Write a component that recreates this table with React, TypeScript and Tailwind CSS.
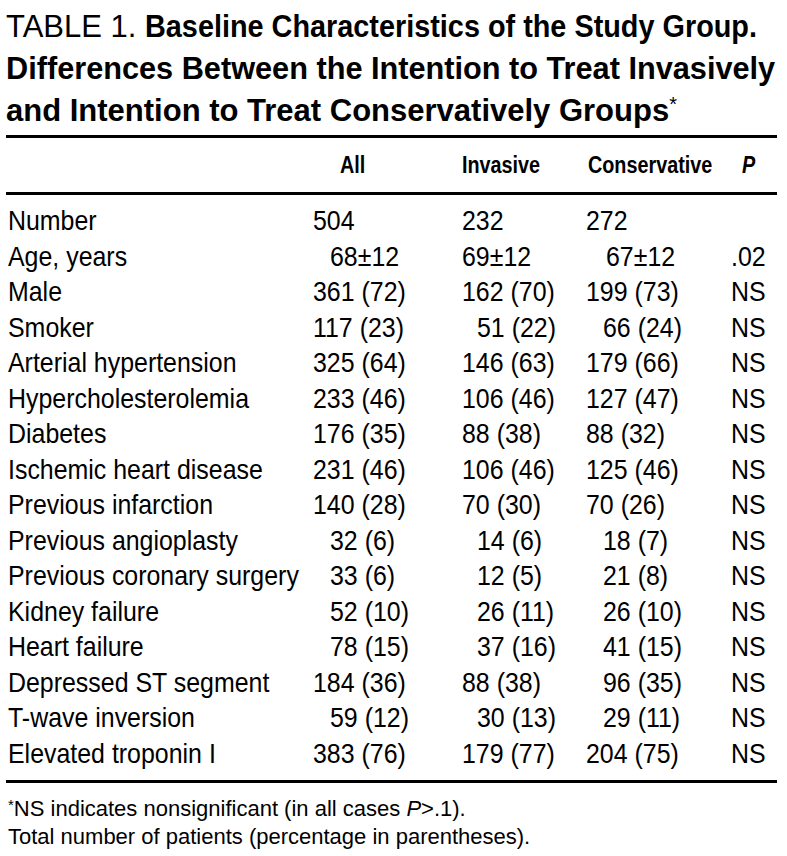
import React from "react";

type Cell = [string, number];
const rows: { label: string; a: Cell; i: Cell; c: Cell; p: string }[] = [
  { label: "Number", a: ["504", 0], i: ["232", 0], c: ["272", 0], p: "" },
  { label: "Age, years", a: ["68±12", 17], i: ["69±12", 0], c: ["67±12", 20], p: ".02" },
  { label: "Male", a: ["361 (72)", 0], i: ["162 (70)", 0], c: ["199 (73)", 0], p: "NS" },
  { label: "Smoker", a: ["117 (23)", 0], i: ["51 (22)", 15], c: ["66 (24)", 17], p: "NS" },
  { label: "Arterial hypertension", a: ["325 (64)", 0], i: ["146 (63)", 0], c: ["179 (66)", 0], p: "NS" },
  { label: "Hypercholesterolemia", a: ["233 (46)", 0], i: ["106 (46)", 0], c: ["127 (47)", 0], p: "NS" },
  { label: "Diabetes", a: ["176 (35)", 0], i: ["88 (38)", 0], c: ["88 (32)", 0], p: "NS" },
  { label: "Ischemic heart disease", a: ["231 (46)", 0], i: ["106 (46)", 0], c: ["125 (46)", 0], p: "NS" },
  { label: "Previous infarction", a: ["140 (28)", 0], i: ["70 (30)", 0], c: ["70 (26)", 0], p: "NS" },
  { label: "Previous angioplasty", a: ["32 (6)", 17], i: ["14 (6)", 15], c: ["18 (7)", 17], p: "NS" },
  { label: "Previous coronary surgery", a: ["33 (6)", 17], i: ["12 (5)", 15], c: ["21 (8)", 17], p: "NS" },
  { label: "Kidney failure", a: ["52 (10)", 17], i: ["26 (11)", 15], c: ["26 (10)", 17], p: "NS" },
  { label: "Heart failure", a: ["78 (15)", 17], i: ["37 (16)", 15], c: ["41 (15)", 17], p: "NS" },
  { label: "Depressed ST segment", a: ["184 (36)", 0], i: ["88 (38)", 0], c: ["96 (35)", 17], p: "NS" },
  { label: "T-wave inversion", a: ["59 (12)", 17], i: ["30 (13)", 15], c: ["29 (11)", 17], p: "NS" },
  { label: "Elevated troponin I", a: ["383 (76)", 0], i: ["179 (77)", 0], c: ["204 (75)", 0], p: "NS" },
];

const font = { fontFamily: '"Liberation Sans", Arial, sans-serif' };

function N({ children }: { children: React.ReactNode }) {
  return <span className="inline-block origin-left scale-x-[0.89]">{children}</span>;
}

export default function App() {
  return (
    <div className="w-[787px] h-[856px] bg-white text-black px-[6px] pt-[6px]" style={font}>
      <div className="text-[31px] leading-[42px] whitespace-nowrap">
        <div>
          <span>TABLE 1. </span>
          <span className="inline-block origin-left scale-x-[0.93] font-bold">
            Baseline Characteristics of the Study Group.
          </span>
        </div>
        <div>
          <span className="inline-block origin-left scale-x-[0.99] font-bold">
            Differences Between the Intention to Treat Invasively
          </span>
        </div>
        <div>
          <span className="font-bold">and Intention to Treat Conservatively Groups</span>
          <span className="relative top-[-10px] text-[20px]">*</span>
        </div>
      </div>
      <div className="w-[771px] border-t-[3px] border-black" />
      <div className="grid grid-cols-[307px_149px_124px_145px_1fr] h-[54px] items-center font-bold text-[23px] whitespace-nowrap">
        <div />
        <div className="pl-[27px]">
          <span className="inline-block origin-left scale-x-[0.86]">All</span>
        </div>
        <div className="pl-[0px]">
          <span className="inline-block origin-left scale-x-[0.86]">Invasive</span>
        </div>
        <div className="pl-[2px]">
          <span className="inline-block origin-left scale-x-[0.86]">Conservative</span>
        </div>
        <div className="pl-[11px] italic">
          <span className="inline-block origin-left scale-x-[0.86]">P</span>
        </div>
      </div>
      <div className="w-[771px] border-t-[3px] border-black" />
      <div className="pt-[8px] text-[28px] leading-[35.5px] whitespace-nowrap">
        {rows.map((r) => (
          <div key={r.label} className="grid grid-cols-[307px_149px_124px_145px_1fr]">
            <div className="pl-[2px]">
              <N>{r.label}</N>
            </div>
            <div style={{ paddingLeft: r.a[1] }}>
              <N>{r.a[0]}</N>
            </div>
            <div style={{ paddingLeft: r.i[1] }}>
              <N>{r.i[0]}</N>
            </div>
            <div style={{ paddingLeft: r.c[1] }}>
              <N>{r.c[0]}</N>
            </div>
            <div>
              <N>{r.p}</N>
            </div>
          </div>
        ))}
      </div>
      <div className="mt-[9px] w-[771px] border-t-[3px] border-black" />
      <div className="pt-[13px] pl-[2px] text-[22px] leading-[26px] whitespace-nowrap">
        <div>
          <span className="relative top-[-6px] text-[15px]">*</span>NS indicates nonsignificant (in all cases{" "}
          <i>P</i>&gt;.1).
        </div>
        <div>Total number of patients (percentage in parentheses).</div>
      </div>
    </div>
  );
}
